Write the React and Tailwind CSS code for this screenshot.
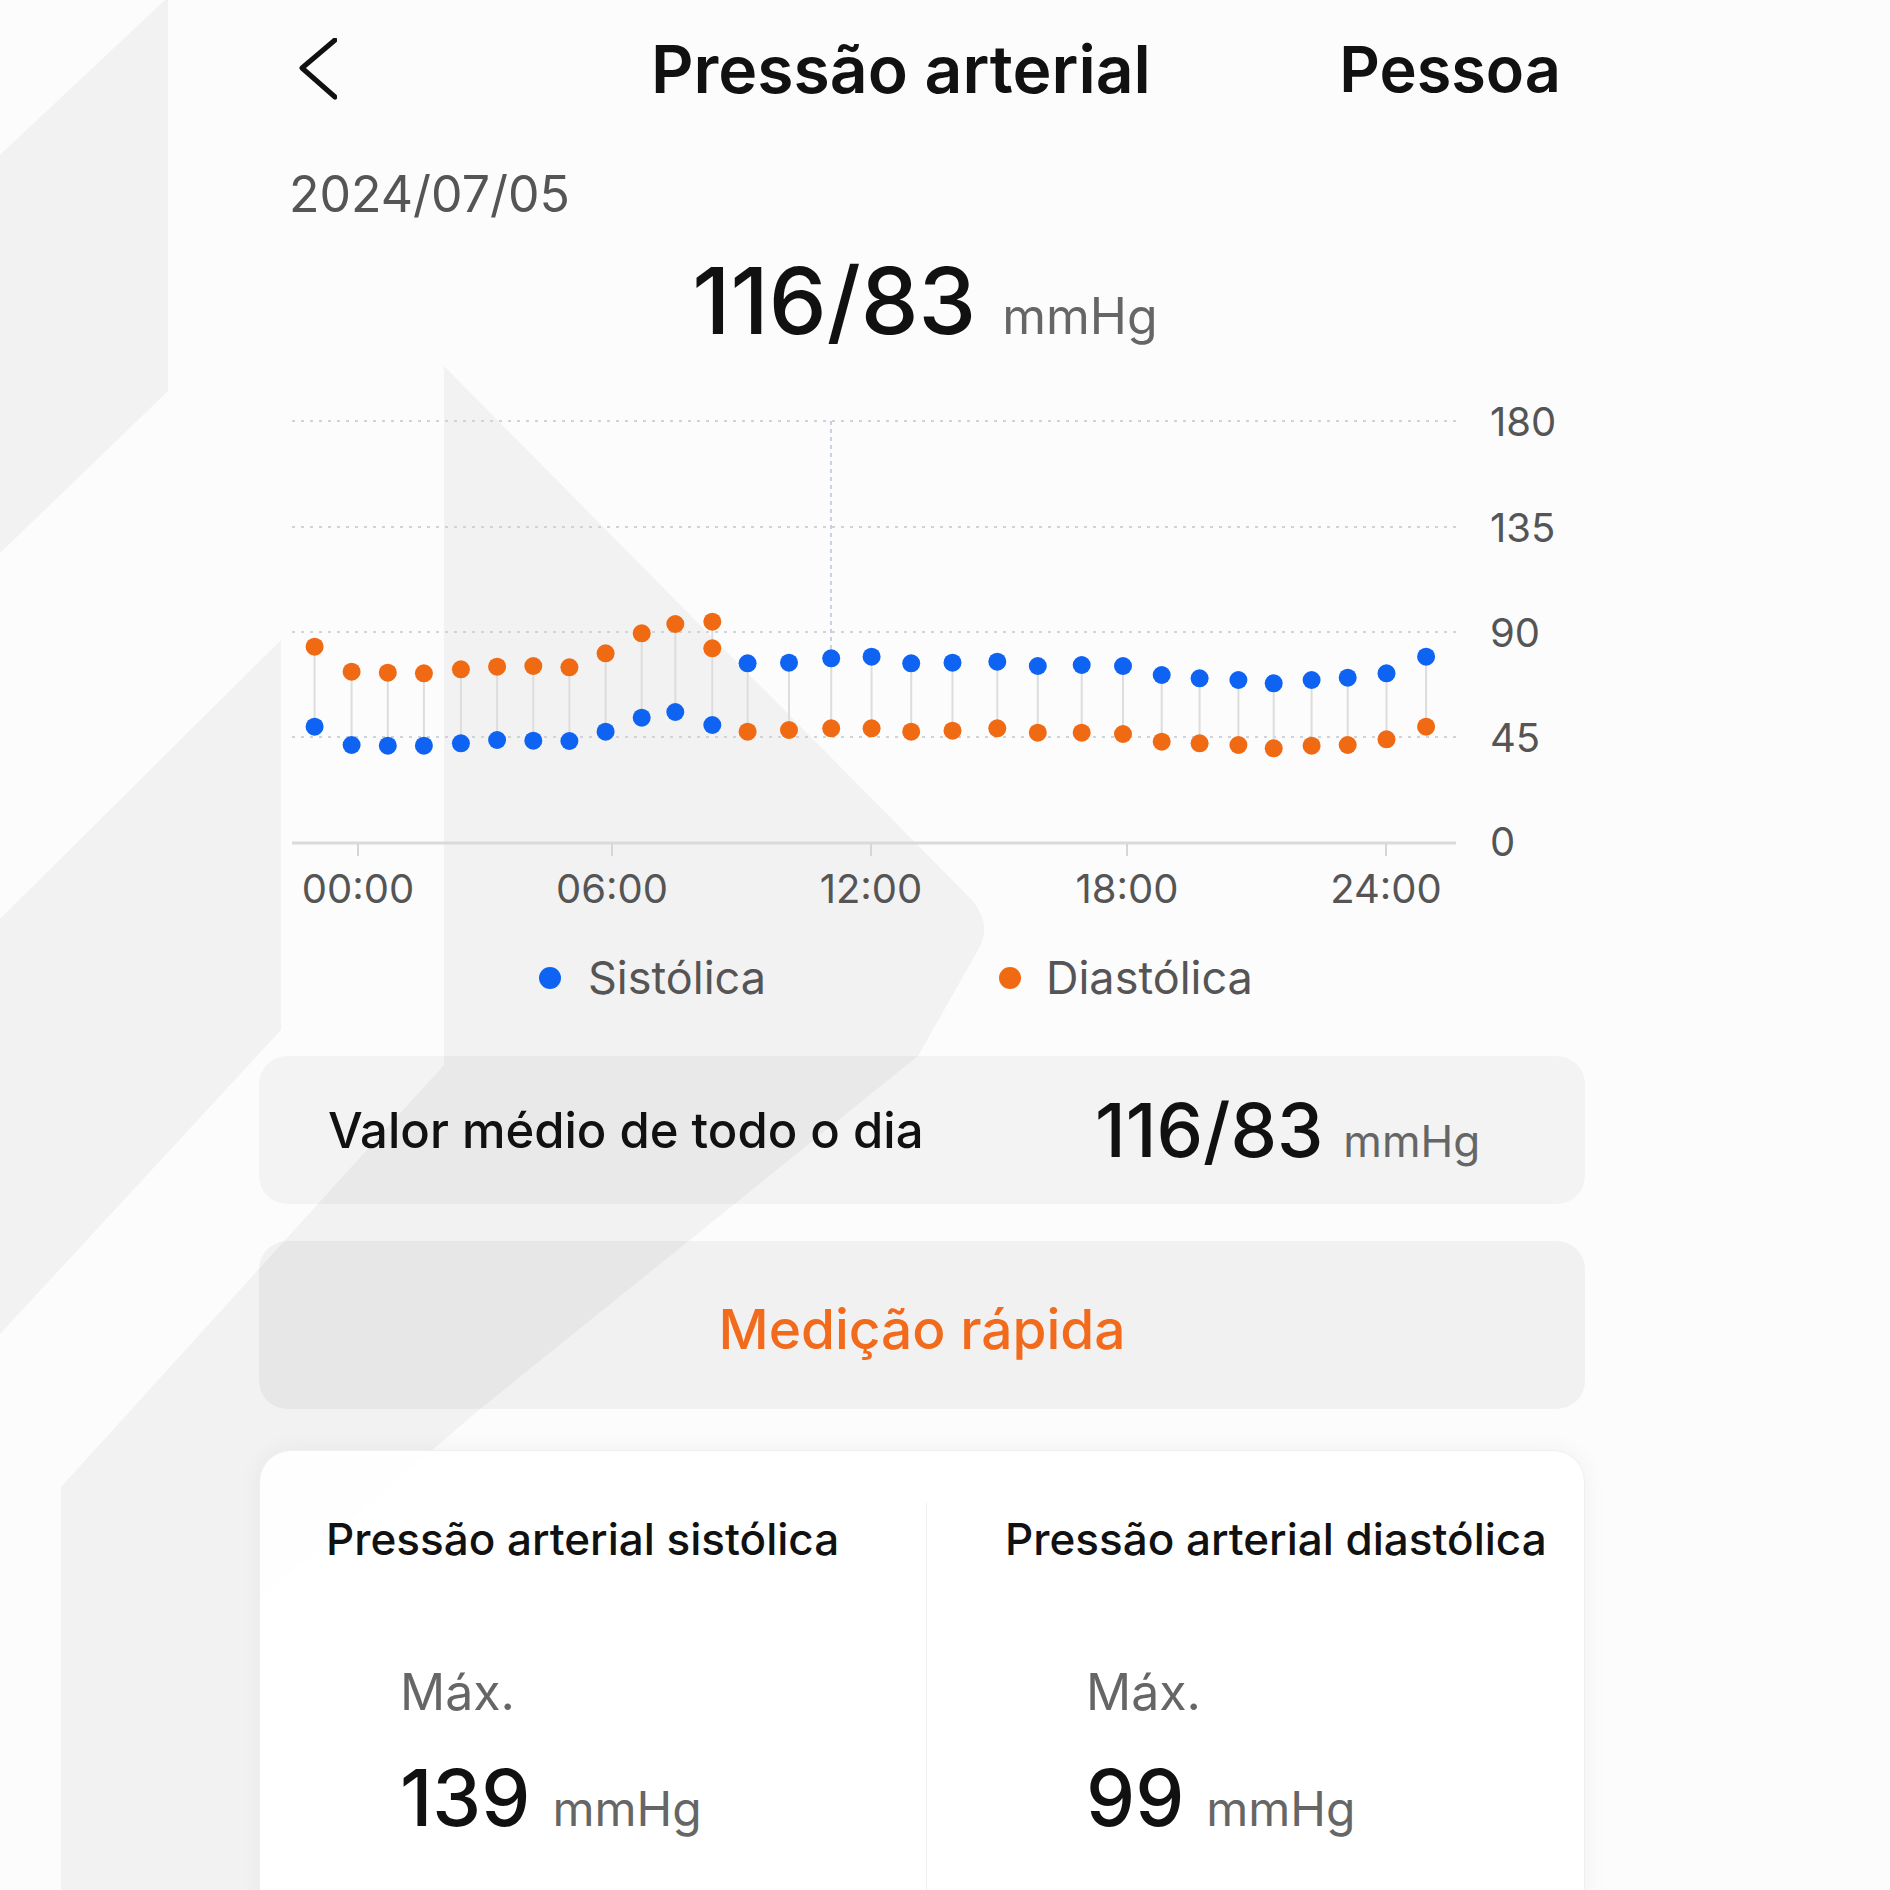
import React from "react";

// chart data in page pixels: [x, orange y, blue y, extra orange y]
const points = [
  [314.6, 646.7, 726.7],
  [351.6, 671.7, 745],
  [387.8, 672.7, 745.7],
  [423.9, 673.3, 745.7],
  [460.9, 669.3, 743.3],
  [497.1, 666.7, 740],
  [533.3, 666, 740.7],
  [569.4, 667.3, 741],
  [605.6, 653.3, 731.7],
  [641.7, 633.3, 717.7],
  [675.3, 624, 712],
  [712.3, 621.7, 725, 648.3],
  [747.6, 731.7, 663.3],
  [789, 730, 662.7],
  [831.2, 728.3, 658.3],
  [871.6, 728.3, 656.7],
  [911.2, 731.7, 663.3],
  [952.5, 730.7, 662.7],
  [997.3, 728.3, 661.7],
  [1037.8, 732.7, 666],
  [1081.7, 732.7, 665],
  [1123, 734, 666],
  [1161.7, 741.7, 675],
  [1199.6, 743.3, 678.3],
  [1238.4, 745, 680],
  [1273.7, 748.3, 683.3],
  [1311.6, 745.7, 680],
  [1347.7, 745, 677.7],
  [1386.5, 739.3, 673.3],
  [1426.1, 726.7, 656.7],
];

const OX = 259;
const OY = 380;
const BLUE = "#0f63f2";
const ORANGE = "#f06a14";
const FONT = "Inter, 'Noto Sans', sans-serif";

const gridRows = [
  { y: 41, label: "180" },
  { y: 147, label: "135" },
  { y: 252, label: "90" },
  { y: 357, label: "45" },
];

const xTicks = [
  { x: 99, label: "00:00" },
  { x: 353, label: "06:00" },
  { x: 612, label: "12:00" },
  { x: 868, label: "18:00" },
  { x: 1127, label: "24:00" },
];

const Chart = () => (
  <svg width="1326" height="540" viewBox="0 0 1326 540" className="mt-[33px] block">
    {gridRows.map((row) => (
      <g key={row.label}>
        <line x1="33" x2="1197" y1={row.y} y2={row.y} stroke="#cfd3da" strokeWidth="2" strokeDasharray="3 6" />
        <text x="1231" y={row.y} dominantBaseline="central" fontFamily={FONT} fontSize="40" fill="#555">
          {row.label}
        </text>
      </g>
    ))}
    <line x1="33" x2="1197" y1="463" y2="463" stroke="#dadada" strokeWidth="3" />
    <text x="1231" y="461" dominantBaseline="central" fontFamily={FONT} fontSize="40" fill="#555">
      0
    </text>
    {xTicks.map((t) => (
      <g key={t.label}>
        <line x1={t.x} x2={t.x} y1="464" y2="476" stroke="#d6d6d6" strokeWidth="2" />
        <text x={t.x} y="508" textAnchor="middle" dominantBaseline="central" fontFamily={FONT} fontSize="40" fill="#555">
          {t.label}
        </text>
      </g>
    ))}
    <line x1="572" x2="572" y1="41" y2="278" stroke="#b8c2d6" strokeWidth="1.5" strokeDasharray="4 4" />
    {points.map(([x, o, b]) => (
      <line key={"l" + x} x1={x - OX} x2={x - OX} y1={Math.min(o, b) - OY} y2={Math.max(o, b) - OY} stroke="#dddddd" strokeWidth="2" />
    ))}
    {points.map(([x, o, b, extra]) => (
      <g key={"p" + x}>
        <circle cx={x - OX} cy={o - OY} r="9" fill={ORANGE} />
        {extra && <circle cx={x - OX} cy={extra - OY} r="9" fill={ORANGE} />}
        <circle cx={x - OX} cy={b - OY} r="9" fill={BLUE} />
      </g>
    ))}
  </svg>
);

// faint watermark shapes behind the page
const Backdrop = () => (
  <svg className="pointer-events-none absolute left-0 top-0" width="1890" height="1890" viewBox="0 0 1890 1890">
    <g fill="#f2f2f2">
      <polygon points="0,155 165,0 168,0 168,391 0,553" />
      <polygon points="0,919 281,640 281,1030 0,1334" />
      <path d="M444 366 L972 900 Q993 925 978 950 L918 1056 L474 1414 L259 1600 L259 1890 L61 1890 L61 1487 L444 1065 Z" />
    </g>
  </svg>
);

const StatColumn = ({ title, value, headPad, bodyPad }) => (
  <div className="flex-1">
    <div className={`pt-[66px] text-[44px] font-medium leading-[45px] text-[#111] ${headPad}`}>{title}</div>
    <div className={`mt-[105px] text-[50px] leading-[50px] text-[#666] ${bodyPad}`}>Máx.</div>
    <div className={`mt-[42px] flex items-baseline gap-[22px] ${bodyPad}`}>
      <span className="text-[78px] font-medium leading-none text-[#111]">{value}</span>
      <span className="text-[48px] leading-none text-[#666]">mmHg</span>
    </div>
  </div>
);

export default function App() {
  return (
    <div className="relative min-h-[1890px] w-full overflow-hidden bg-[#fcfcfc] font-['Inter','Noto_Sans',sans-serif]">
      <Backdrop />
      <div className="relative ml-[259px] w-[1326px]">
        <header className="flex h-[138px] items-center">
          <button className="ml-[40px] flex h-[62px] w-[38px] items-center justify-center">
            <svg width="38" height="62" viewBox="0 0 38 62" fill="none">
              <path d="M36 2 L3 30 L36 59" stroke="#111" strokeWidth="5" strokeLinecap="round" strokeLinejoin="round" />
            </svg>
          </button>
          <h1 className="ml-[314px] text-[66px] font-semibold leading-none text-[#111]">Pressão arterial</h1>
          <span className="ml-auto mr-[24px] text-[63px] font-semibold leading-none text-[#111]">Pessoa</span>
        </header>

        <div className="mt-[26px] pl-[30px] text-[50px] leading-[60px] text-[#555]">2024/07/05</div>

        <div className="mt-[31px] flex items-baseline justify-center gap-[26px] pl-[6px]">
          <span className="text-[92px] font-medium leading-none text-[#111]">116/83</span>
          <span className="text-[50px] leading-none text-[#666]">mmHg</span>
        </div>

        <Chart />

        <div className="mt-[35px] flex h-[45px] items-center">
          <div className="ml-[280px] flex w-[460px] items-center gap-[27px]">
            <span className="h-[22px] w-[22px] rounded-full bg-[#0f63f2]" />
            <span className="text-[45px] leading-[45px] text-[#555]">Sistólica</span>
          </div>
          <div className="flex items-center gap-[25px]">
            <span className="h-[22px] w-[22px] rounded-full bg-[#f06a14]" />
            <span className="text-[45px] leading-[45px] text-[#555]">Diastólica</span>
          </div>
        </div>

        <div className="mt-[56px] flex h-[148px] items-center rounded-[28px] bg-black/[0.035]">
          <div className="w-[836px] pl-[69px] text-[49px] font-medium leading-none text-[#111]">Valor médio de todo o dia</div>
          <div className="flex items-baseline gap-[20px]">
            <span className="text-[74px] font-medium leading-none text-[#111]">116/83</span>
            <span className="text-[44px] leading-none text-[#666]">mmHg</span>
          </div>
        </div>

        <button className="mt-[37px] flex h-[168px] w-full items-center justify-center rounded-[28px] bg-black/[0.045] pt-[8px] text-[55px] font-medium text-[#f26a1c]">
          Medição rápida
        </button>

        <div className="mt-[41px] flex h-[520px] rounded-t-[32px] border border-[#efefef] bg-white/90 shadow-[0_0_24px_rgba(0,0,0,0.05)]">
          <div className="w-[666px]">
            <StatColumn title="Pressão arterial sistólica" value="139" headPad="pl-[66px]" bodyPad="pl-[140px]" />
          </div>
          <div className="mt-[52px] w-px bg-[#eeeeee]" />
          <StatColumn title="Pressão arterial diastólica" value="99" headPad="pl-[78px]" bodyPad="pl-[159px]" />
        </div>
      </div>
    </div>
  );
}
